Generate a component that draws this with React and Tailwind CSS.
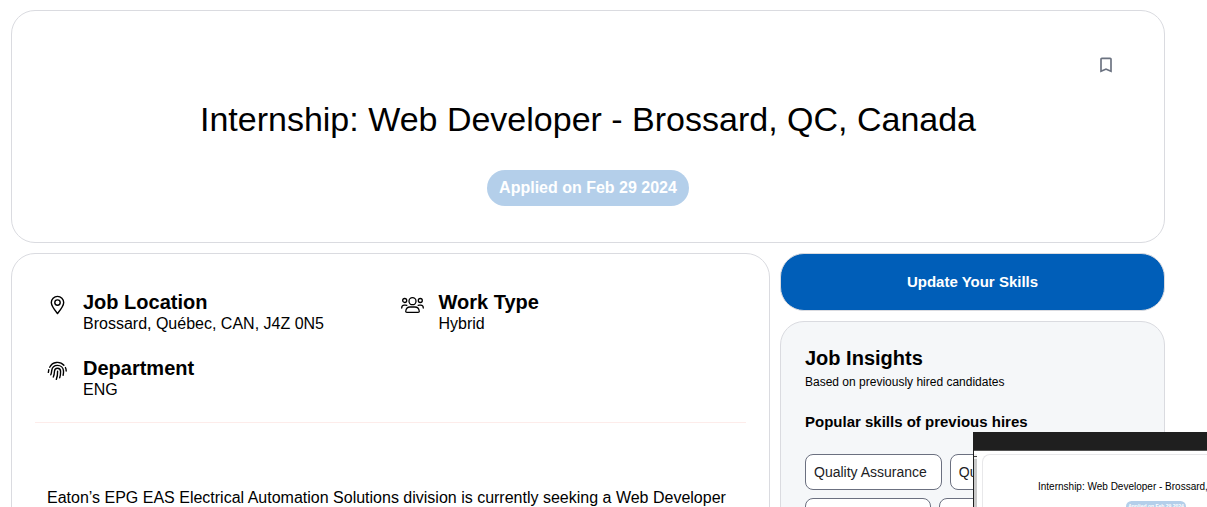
import { MdBookmarkBorder } from "react-icons/md";

function PinIcon() {
  return (
    <svg className="h-6 w-6" viewBox="0 0 24 24" fill="none" stroke="currentColor" strokeWidth="1.4" strokeLinejoin="round" aria-hidden="true">
      <path d="M12.500 20.600C10.700 18.400 6.300 13.200 6.300 9.600a6.200 6.200 0 0 1 12.400 0c0 3.600-4.400 8.800-6.200 11z" />
      <circle cx="12.500" cy="9.600" r="2.700" />
    </svg>
  );
}

function PeopleIcon() {
  return (
    <svg className="h-6 w-6" viewBox="0 0 24 24" fill="none" stroke="currentColor" strokeWidth="1.300" strokeLinecap="round" strokeLinejoin="round" aria-hidden="true">
      <circle cx="11.500" cy="8.200" r="3.500" />
      <circle cx="3.700" cy="7.500" r="2" />
      <circle cx="19.300" cy="7.500" r="2" />
      <path d="M6.100 19.400c-1.300 0-1.500-.8-1.300-1.700.4-2.100 1.900-3.700 4.200-3.700h5c2.300 0 3.800 1.600 4.200 3.700.2.900 0 1.700-1.300 1.700z" />
      <path d="M.7 15c0-1.700 1-2.900 2.500-2.900h1.400c.5 0 .9.100 1.200.3M22.300 15c0-1.700-1-2.900-2.500-2.900h-1.400c-.5 0-.9.100-1.200.3" />
    </svg>
  );
}

function FingerprintIcon() {
  return (
    <svg className="h-6 w-6" viewBox="-0.5 0 24 24" fill="none" stroke="currentColor" strokeWidth="1.400" strokeLinecap="round" aria-hidden="true">
      <path d="M2.800 13.400c.4-1 .3-1.800.5-2.800M4.200 8.200A8.600 8.600 0 0 1 18.400 6.300M19.900 8.500c.6 1.100.8 2.300.8 3.600" />
      <path d="M5.300 15.800c.7-1.500.7-2.900.9-4.200.4-3.100 2.800-5.200 5.800-5.200 3.300 0 5.800 2.400 6 5.500.1 1.500 0 3-.4 4.400" />
      <path d="M7.800 18c1-2 1.100-3.900 1.200-5.700.1-1.800 1.300-3.100 3-3.100s3.100 1.400 3.100 3.200c0 2.200-.1 4.200-.9 6.400" />
      <path d="M12.100 12.200c.1 3.200-.3 5.600-1.300 8.200" />
    </svg>
  );
}

function Fact({ icon, label, value }) {
  return (
    <div className="flex gap-[14px]">
      <div className="pt-[3px]">{icon}</div>
      <div>
        <h2 className="text-xl leading-6 font-bold">{label}</h2>
        <p className="text-base leading-5">{value}</p>
      </div>
    </div>
  );
}

function Skill({ children }) {
  return (
    <li className="h-9 rounded-lg border border-[#6b7080] bg-white pr-[14px] pl-2 text-sm leading-[34px] text-[#202124]">
      {children}
    </li>
  );
}

function Preview() {
  return (
    <aside className="absolute right-0 bottom-0 h-[75px] w-[234px] overflow-hidden border-l border-[#1f1f1f] bg-white">
      <div className="h-[19px] border-b border-[#555] bg-[#1f1f1f]" />
      <div className="flex h-full pt-[3px]">
        <div className="w-1 bg-[#c9c9c9]">
          <div className="flex h-[5px] items-center bg-[#f1f1f1]">
            <div className="h-px w-[3px] bg-[#444]" />
          </div>
        </div>
        <div className="ml-[5px] flex flex-1 flex-col rounded-tl-lg border-t border-l border-[#e8e8ea] pt-[25px] pl-[55px]">
          <p className="text-[10px] leading-[13px] whitespace-nowrap">Internship: Web Developer - Brossard, QC, Canada</p>
          <span className="mt-2 ml-[88px] h-[11px] w-15 rounded-full bg-[#b4cfea] text-center text-[5px] leading-[11px] font-bold text-white">
            Applied on Feb 29 2024
          </span>
        </div>
      </div>
    </aside>
  );
}

export default function App() {
  return (
    <div className="relative h-screen overflow-hidden bg-white pt-[10px] pr-[42px] pl-[11px] font-['Liberation_Sans',Arial,sans-serif] text-black">
      <header className="flex flex-col items-center rounded-3xl border border-[#dadbe0] px-12 pt-11 pb-9">
        <button type="button" aria-label="Save job" className="self-end text-[#6b7280]">
          <MdBookmarkBorder className="h-5 w-5" />
        </button>
        <h1 className="mt-[22px] text-[34px] leading-11 font-normal">Internship: Web Developer - Brossard, QC, Canada</h1>
        <p className="mt-[29px] rounded-full bg-[#b4cfea] px-3 text-base leading-9 font-bold text-white">Applied on Feb 29 2024</p>
      </header>

      <div className="mt-[10px] flex gap-[10px]">
        <main className="min-w-0 flex-1 rounded-3xl border border-[#dadbe0] px-[23px] pt-9 pb-10">
          <div className="grid grid-cols-2 gap-x-[10px] gap-y-[22px] pl-[10px]">
            <Fact icon={<PinIcon />} label="Job Location" value="Brossard, Québec, CAN, J4Z 0N5" />
            <Fact icon={<PeopleIcon />} label="Work Type" value="Hybrid" />
            <Fact icon={<FingerprintIcon />} label="Department" value="ENG" />
          </div>
          <hr className="mt-[22px] border-[#fdecea]" />
          <p className="mt-[63px] px-3 text-base leading-6">
            Eaton’s EPG EAS Electrical Automation Solutions division is currently seeking a Web Developer
          </p>
        </main>

        <div className="flex w-[385px] flex-col gap-[10px]">
          <button type="button" className="h-[58px] rounded-3xl border border-[#dadbe0] bg-[#005eb8] text-[15px] font-bold text-white">
            Update Your Skills
          </button>
          <section className="rounded-3xl border border-[#dadbe0] bg-[#f5f7f9] px-6 pt-6 pb-6">
            <h2 className="text-xl leading-6 font-bold">Job Insights</h2>
            <p className="mt-1 text-xs leading-4">Based on previously hired candidates</p>
            <h3 className="mt-[22px] text-[15px] leading-5 font-bold">Popular skills of previous hires</h3>
            <ul className="mt-[22px] flex flex-wrap gap-2">
              <Skill>Quality Assurance</Skill>
              <Skill>Quality Control</Skill>
              <Skill>Problem Solving</Skill>
              <Skill>Web Development</Skill>
            </ul>
          </section>
        </div>
      </div>
      <Preview />
    </div>
  );
}
